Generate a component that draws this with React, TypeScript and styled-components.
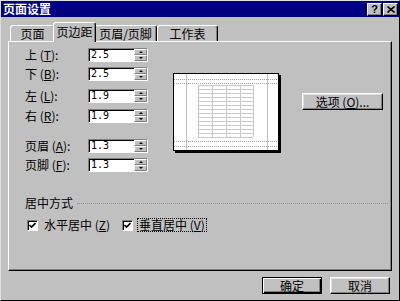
import React from 'react';
import styled, { createGlobalStyle } from 'styled-components';

const GlobalStyle = createGlobalStyle`
  html, body {
    margin: 0;
    padding: 0;
    background: #c0c0c0;
  }
  body {
    font-family: "Noto Sans CJK SC", "Liberation Sans", sans-serif;
    font-size: 12px;
    color: #000;
  }
`;

const Dialog = styled.div`
  width: 400px;
  height: 301px;
  box-sizing: border-box;
  background: #c0c0c0;
  border: 1px solid;
  border-color: #dfdfdf #000 #000 #dfdfdf;
  display: flex;
  flex-direction: column;
`;

const TitleBar = styled.div`
  height: 16px;
  flex: 0 0 16px;
  background: #000080;
  color: #fff;
  display: flex;
  align-items: center;
  justify-content: space-between;
  padding: 0 1px 0 2px;
`;

const TitleText = styled.span`
  font-weight: bold;
  font-size: 12px;
  line-height: 16px;
`;

const TitleButtons = styled.div`
  display: flex;
  gap: 1px;
`;

const TitleButton = styled.div`
  width: 15px;
  height: 13px;
  box-sizing: border-box;
  background: #c0c0c0;
  border: 1px solid;
  border-color: #fff #000 #000 #fff;
  box-shadow: inset -1px -1px #808080;
  display: flex;
  align-items: center;
  justify-content: center;
  color: #000;
  font: bold 11px "Liberation Sans", sans-serif;
  line-height: 11px;
`;

const Body = styled.div`
  padding: 5px 7px 0 7px;
  display: flex;
  flex-direction: column;
`;

const TabRow = styled.div`
  display: flex;
  align-items: flex-end;
  height: 19px;
  padding-left: 2px;
  position: relative;
  z-index: 1;
`;

const Tab = styled.div<{ $w: number; $active?: boolean }>`
  width: ${p => p.$w}px;
  height: ${p => (p.$active ? 20 : 16)}px;
  margin: ${p => (p.$active ? '0 -2px -1px' : '0')};
  position: relative;
  z-index: ${p => (p.$active ? 2 : 1)};
  box-sizing: border-box;
  background: #c0c0c0;
  border: 1px solid;
  border-bottom: none;
  border-color: #fff #000 transparent #fff;
  border-radius: 3px 3px 0 0;
  box-shadow: inset -1px 0 #808080;
  display: flex;
  align-items: center;
  justify-content: center;
  font-size: 12px;
  line-height: 14px;
  padding-bottom: ${p => (p.$active ? 2 : 0)}px;
`;

const Panel = styled.div`
  height: 230px;
  box-sizing: border-box;
  border: 1px solid;
  border-color: #fff #000 #000 #fff;
  box-shadow: inset -1px -1px #808080;
  padding: 6px 8px 0 16px;
  display: flex;
  flex-direction: column;
`;

const TopSection = styled.div`
  display: flex;
  align-items: flex-start;
`;

const Fields = styled.div`
  display: flex;
  flex-direction: column;
`;

const FieldRow = styled.div<{ $mt: number }>`
  display: flex;
  align-items: center;
  height: 14px;
  margin-top: ${p => p.$mt}px;
`;

const FieldLabel = styled.label`
  width: 63px;
  font-size: 12px;
  line-height: 14px;
  white-space: nowrap;
`;

const SpinBox = styled.div`
  width: 60px;
  height: 14px;
  box-sizing: border-box;
  display: flex;
  background: #fff;
  border: 1px solid;
  border-color: #808080 #fff #fff #808080;
  box-shadow: inset 1px 1px #000;
`;

const SpinValue = styled.span`
  flex: 1;
  font: 10px "DejaVu Sans Mono", monospace;
  line-height: 12px;
  padding-left: 2px;
`;

const SpinButtons = styled.div`
  width: 13px;
  display: flex;
  flex-direction: column;
`;

const SpinButton = styled.div`
  flex: 1;
  box-sizing: border-box;
  background: #c0c0c0;
  border: 1px solid;
  border-color: #fff #808080 #808080 #fff;
  display: flex;
  align-items: center;
  justify-content: center;
`;

const Arrow = styled.span<{ $down?: boolean }>`
  width: 0;
  height: 0;
  border-left: 2px solid transparent;
  border-right: 2px solid transparent;
  ${p => (p.$down ? 'border-top: 2px solid #000;' : 'border-bottom: 2px solid #000;')}
`;

const Preview = styled.div`
  margin: 25px 0 0 25px;
  width: 108px;
  height: 80px;
`;

const PushButton = styled.button<{ $w: number; $default?: boolean }>`
  width: ${p => p.$w}px;
  height: 17px;
  box-sizing: border-box;
  padding: 0;
  background: #c0c0c0;
  color: #000;
  font-family: "Noto Sans CJK SC", "Liberation Sans", sans-serif;
  font-size: 12px;
  line-height: 14px;
  border: 1px solid;
  border-color: ${p => (p.$default ? '#000' : '#fff #000 #000 #fff')};
  box-shadow: ${p =>
    p.$default
      ? 'inset 1px 1px #fff, inset -1px -1px #000, inset -2px -2px #808080'
      : 'inset -1px -1px #808080, inset 1px 1px #dfdfdf'};
`;

const OptionsButton = styled(PushButton)`
  margin: 45px 0 0 21px;
`;

const GroupHeader = styled.div`
  display: flex;
  align-items: center;
  height: 14px;
  margin-top: 24px;
`;

const GroupTitle = styled.span`
  font-size: 12px;
  line-height: 14px;
`;

const GroupLine = styled.div`
  flex: 1;
  margin: 0 -5px 0 4px;
  border-top: 1px dotted #909090;
`;

const CheckRow = styled.div`
  display: flex;
  align-items: center;
  height: 14px;
  margin-top: 8px;
`;

const CheckItem = styled.div<{ $w?: number }>`
  display: flex;
  align-items: center;
  gap: 4px;
  ${p => (p.$w ? `width: ${p.$w}px;` : '')}
  padding-left: 2px;
  box-sizing: border-box;
`;

const CheckBox = styled.span`
  width: 11px;
  height: 11px;
  box-sizing: border-box;
  background: #fff;
  border: 1px solid;
  border-color: #808080 #fff #fff #808080;
  box-shadow: inset 1px 1px #000;
  display: flex;
  align-items: center;
  justify-content: center;
`;

const CheckText = styled.span<{ $focus?: boolean }>`
  font-size: 12px;
  line-height: 12px;
  padding: 0 1px;
  border: 1px ${p => (p.$focus ? 'dotted #000' : 'solid transparent')};
`;

const Footer = styled.div`
  display: flex;
  justify-content: flex-end;
  gap: 8px;
  margin-top: 6px;
  padding-right: 2px;
`;

const fields = [
  { label: '上', key: 'T', value: '2.5', mt: 0 },
  { label: '下', key: 'B', value: '2.5', mt: 5 },
  { label: '左', key: 'L', value: '1.9', mt: 8 },
  { label: '右', key: 'R', value: '1.9', mt: 6 },
  { label: '页眉', key: 'A', value: '1.3', mt: 16 },
  { label: '页脚', key: 'F', value: '1.3', mt: 5 },
];

const tabs = [
  { label: '页面', w: 45 },
  { label: '页边距', w: 43, active: true },
  { label: '页眉/页脚', w: 63 },
  { label: '工作表', w: 61 },
];

function Check() {
  return (
    <svg width="7" height="7" viewBox="0 0 7 7">
      <path d="M0.5 3 L2.5 5 L6.5 1" fill="none" stroke="#000" strokeWidth="1.6" />
    </svg>
  );
}

function PagePreview() {
  const cols = [25, 39, 53, 67, 80];
  const rows = Array.from({ length: 14 }, (_, i) => 12 + i * 4);
  return (
    <svg width="108" height="80" viewBox="0 0 108 80">
      <rect x="2" y="2" width="106" height="78" fill="#000" />
      <rect x="0.5" y="0.5" width="105" height="77" fill="#fff" stroke="#000" />
      <line x1="13.5" y1="1" x2="13.5" y2="77" stroke="#c0c0c0" />
      <line x1="94.5" y1="1" x2="94.5" y2="77" stroke="#c0c0c0" />
      {[6.5, 10.5, 68.5, 73.5].map(y => (
        <line key={y} x1="1" y1={y} x2="105" y2={y} stroke="#a0a0a0" strokeDasharray="1 1" />
      ))}
      {rows.map(y => (
        <line key={y} x1="25" y1={y + 0.5} x2="80" y2={y + 0.5} stroke="#c8c8c8" />
      ))}
      {cols.map(x => (
        <line key={x} x1={x + 0.5} y1="12" x2={x + 0.5} y2="64" stroke="#c8c8c8" />
      ))}
    </svg>
  );
}

export default function App() {
  return (
    <>
      <GlobalStyle />
      <Dialog>
        <TitleBar>
          <TitleText>页面设置</TitleText>
          <TitleButtons>
            <TitleButton>?</TitleButton>
            <TitleButton>
              <svg width="8" height="7" viewBox="0 0 8 7">
                <path d="M0.5 0.5 L7.5 6.5 M7.5 0.5 L0.5 6.5" stroke="#000" strokeWidth="1.6" />
              </svg>
            </TitleButton>
          </TitleButtons>
        </TitleBar>
        <Body>
          <TabRow>
            {tabs.map(t => (
              <Tab key={t.label} $w={t.w} $active={t.active}>
                {t.label}
              </Tab>
            ))}
          </TabRow>
          <Panel>
            <TopSection>
              <Fields>
                {fields.map(f => (
                  <FieldRow key={f.key} $mt={f.mt}>
                    <FieldLabel>
                      {f.label} (<u>{f.key}</u>):
                    </FieldLabel>
                    <SpinBox>
                      <SpinValue>{f.value}</SpinValue>
                      <SpinButtons>
                        <SpinButton>
                          <Arrow />
                        </SpinButton>
                        <SpinButton>
                          <Arrow $down />
                        </SpinButton>
                      </SpinButtons>
                    </SpinBox>
                  </FieldRow>
                ))}
              </Fields>
              <Preview>
                <PagePreview />
              </Preview>
              <OptionsButton $w={81}>
                选项 (<u>O</u>)...
              </OptionsButton>
            </TopSection>
            <GroupHeader>
              <GroupTitle>居中方式</GroupTitle>
              <GroupLine />
            </GroupHeader>
            <CheckRow>
              <CheckItem $w={95}>
                <CheckBox>
                  <Check />
                </CheckBox>
                <CheckText>
                  水平居中 (<u>Z</u>)
                </CheckText>
              </CheckItem>
              <CheckItem>
                <CheckBox>
                  <Check />
                </CheckBox>
                <CheckText $focus>
                  垂直居中 (<u>V</u>)
                </CheckText>
              </CheckItem>
            </CheckRow>
          </Panel>
          <Footer>
            <PushButton $w={60} $default>
              确定
            </PushButton>
            <PushButton $w={60}>取消</PushButton>
          </Footer>
        </Body>
      </Dialog>
    </>
  );
}
